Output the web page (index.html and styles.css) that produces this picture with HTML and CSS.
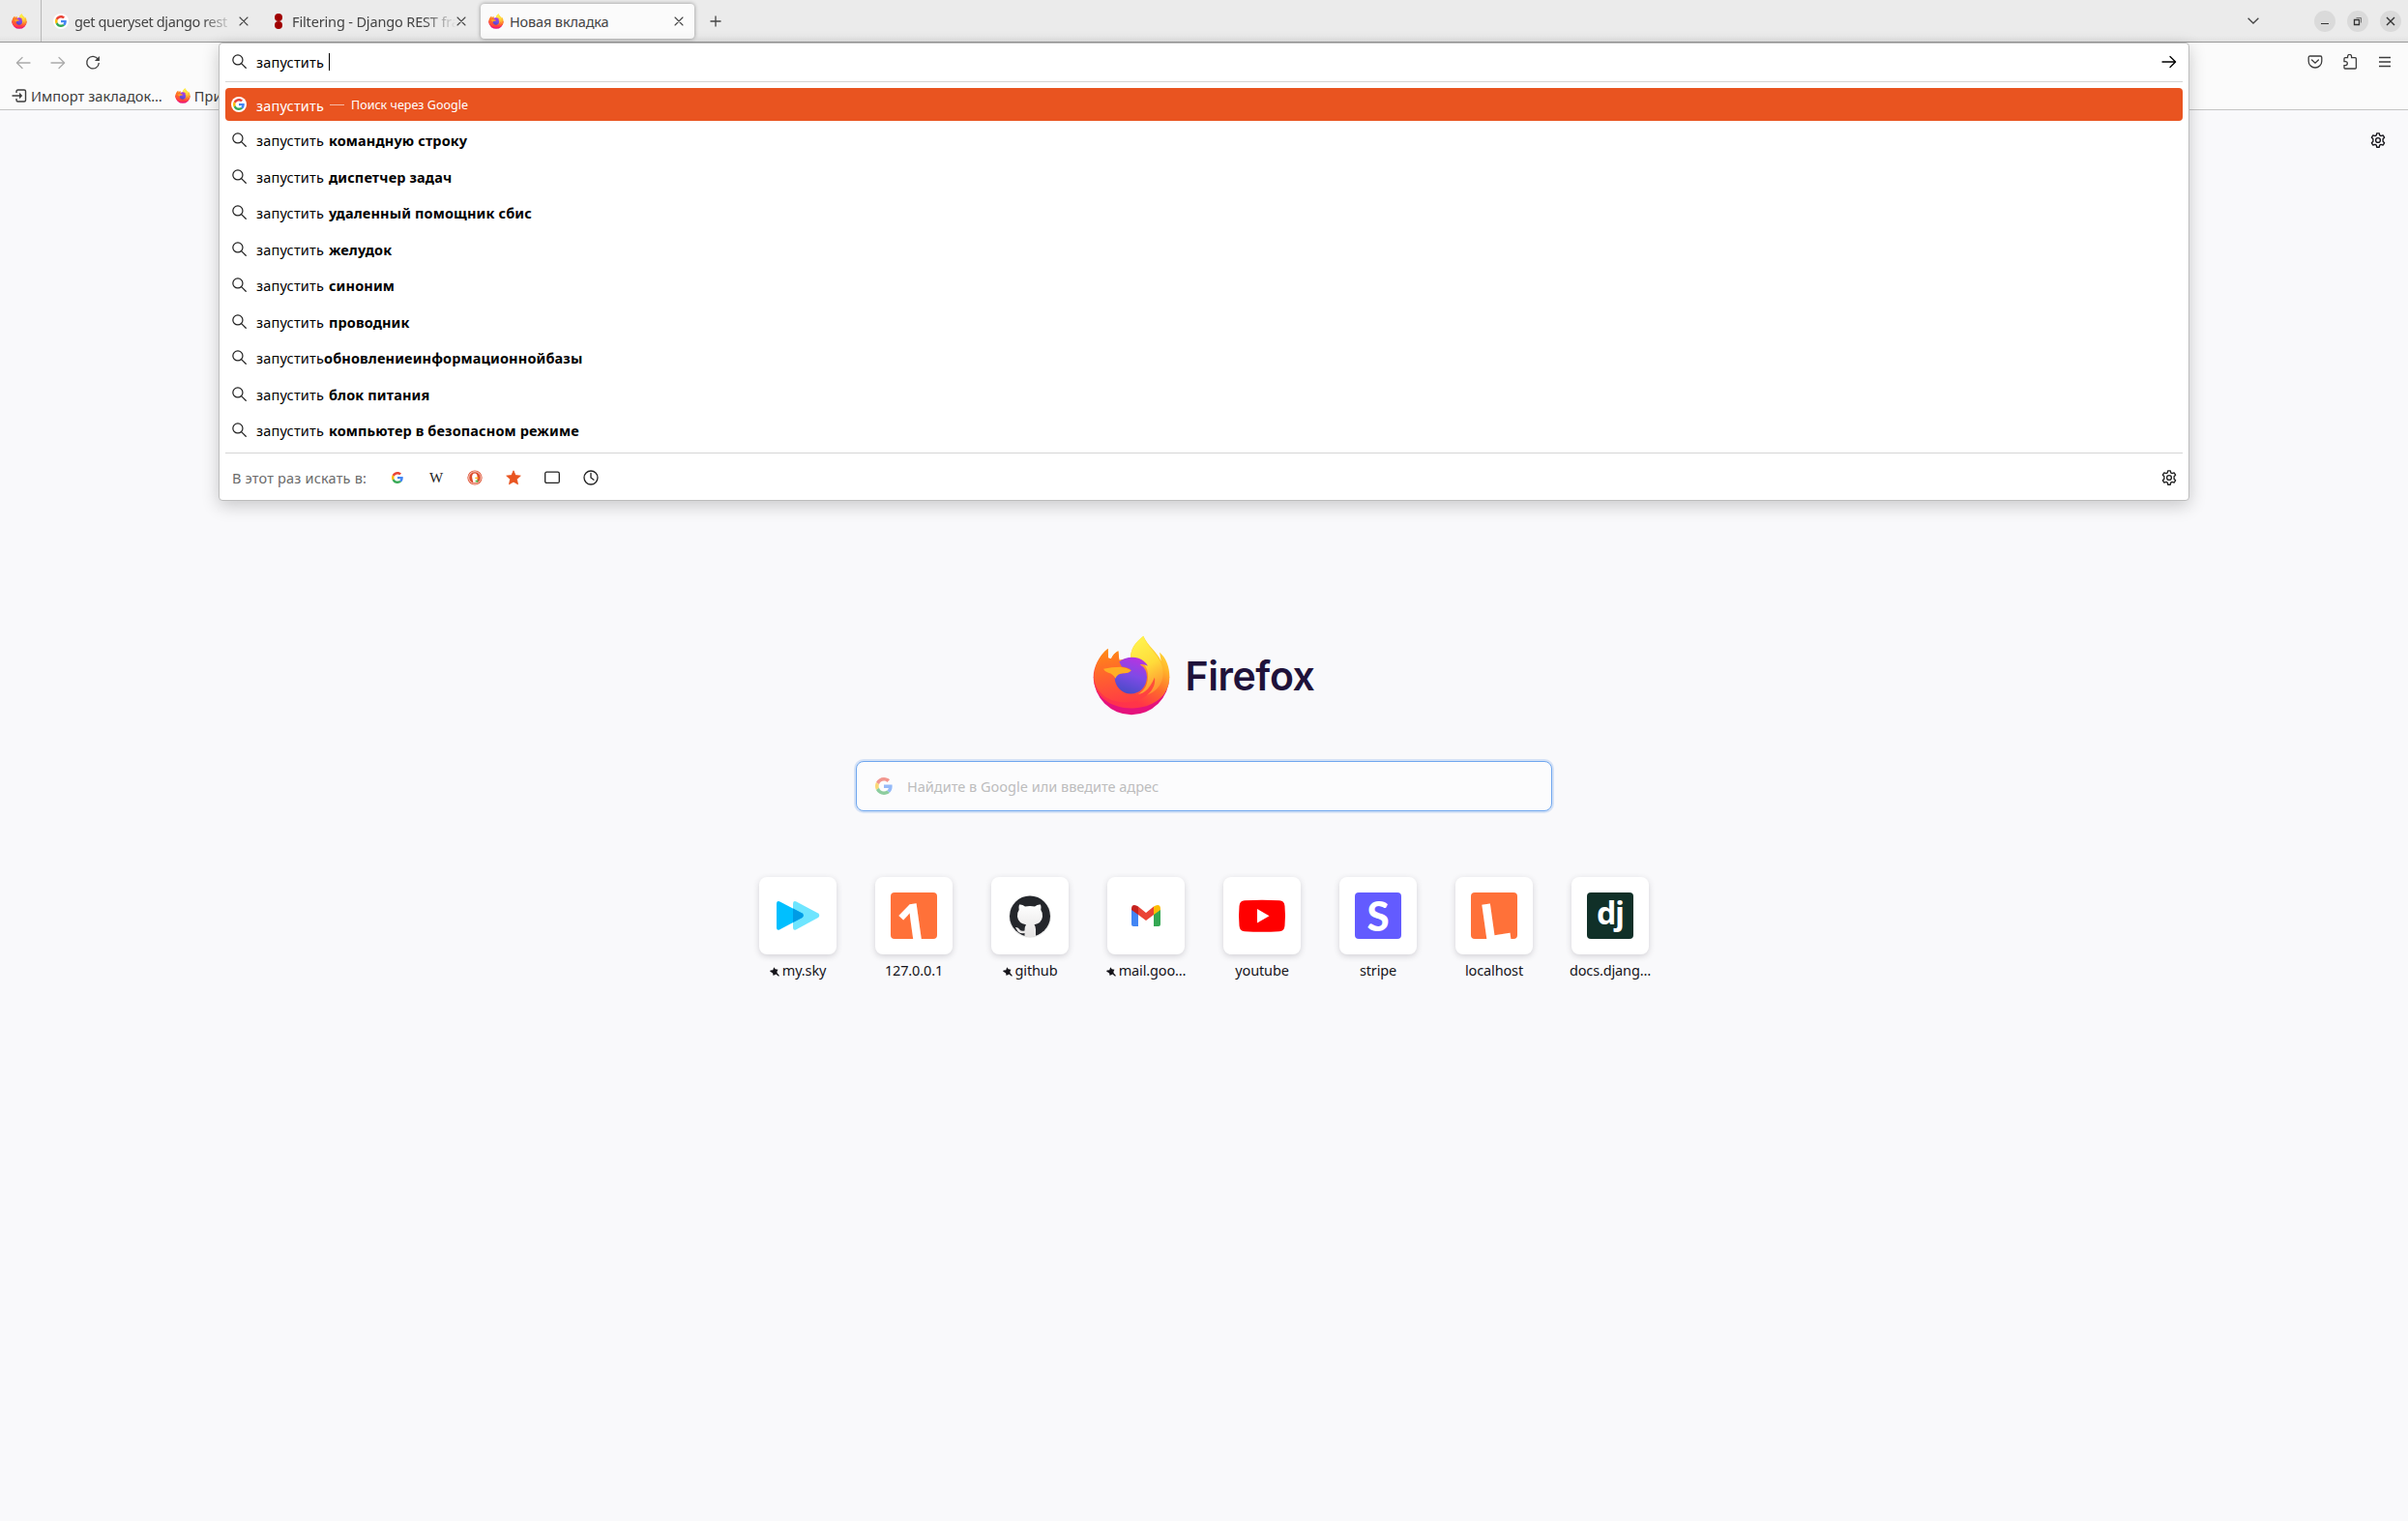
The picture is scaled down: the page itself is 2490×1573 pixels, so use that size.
FILE: index.html
```html
<!DOCTYPE html>
<html lang="ru">
<head>
<meta charset="utf-8">
<title>Новая вкладка</title>
<link rel="stylesheet" href="styles.css">
</head>
<body>
<svg class="defs" width="0" height="0" aria-hidden="true">
  <defs>
    <linearGradient id="body" x1=".8" y1="0" x2=".25" y2="1"><stop offset="0" stop-color="#ffe93f"/><stop offset=".3" stop-color="#ffb52a"/><stop offset=".55" stop-color="#ff6b2b"/><stop offset=".8" stop-color="#ff3647"/><stop offset="1" stop-color="#ff3050"/></linearGradient>
    <linearGradient id="flame" x1=".3" y1="0" x2=".6" y2="1"><stop offset="0" stop-color="#fff44f"/><stop offset=".5" stop-color="#ffdc3a"/><stop offset="1" stop-color="#ff8a30"/></linearGradient>
    <linearGradient id="orb" x1=".7" y1="0" x2=".4" y2="1"><stop offset="0" stop-color="#b833e1"/><stop offset=".5" stop-color="#7f4ae6"/><stop offset="1" stop-color="#4a4bc8"/></linearGradient>
    <linearGradient id="face" x1=".3" y1="0" x2=".5" y2="1"><stop offset="0" stop-color="#ff8a16"/><stop offset=".5" stop-color="#ff6030"/><stop offset="1" stop-color="#ff3c44"/></linearGradient>
    <linearGradient id="cat" x1="0" y1="0" x2="0" y2="1"><stop offset="0" stop-color="#fff"/><stop offset="1" stop-color="#e4e2e2"/></linearGradient>
    <symbol id="firefox" viewBox="60 50 240 248">
      <path fill="#e5127c" d="M63 180A117 116 0 0 0 297 180L280 160H80Z"/>
      <path fill="url(#body)" d="M107 91C80 112 62 148 62 180C63 240 118 276 180 276C248 276 298 238 298 178C298 148 288 120 267 102L272 130C260 102 230 82 217 52C192 72 178 90 177 120L142 126L139 98Q124 106 117 122L108 120Z"/>
      <path fill="url(#flame)" d="M217 52C192 72 177 92 177 122C215 122 238 150 230 190C226 216 208 232 188 238C235 244 276 215 278 170C280 118 233 96 217 52Z"/>
      <path fill="url(#face)" d="M107 91C76 118 64 150 64 184C70 224 100 256 160 258C225 256 258 215 252 180C230 232 205 236 176 232C148 230 128 206 128 182C130 172 138 166 150 164L178 158C174 150 160 148 150 144L142 126L139 98Q124 106 117 122L108 120Z"/>
      <path fill="url(#orb)" d="M142 132C160 114 200 112 218 130Q228 138 231 145Q218 138 206 140Q228 152 228 180C226 212 204 231 178 231C150 231 128 208 128 180Q134 168 154 167Q172 168 179 158Q170 149 150 147Z"/>
      <path fill="#ffae24" d="M93 154Q118 148 146 148Q166 150 179 158Q172 168 154 167Q136 168 130 184Q124 170 108 166Q96 162 93 154Z"/>
    </symbol>
    <symbol id="google" viewBox="0 0 48 48">
      <path fill="#EA4335" d="M24 9.5c3.54 0 6.71 1.22 9.21 3.6l6.85-6.85C35.9 2.38 30.47 0 24 0 14.62 0 6.51 5.38 2.56 13.22l7.98 6.19C12.43 13.72 17.74 9.5 24 9.5z"/>
      <path fill="#4285F4" d="M46.98 24.55c0-1.57-.15-3.09-.38-4.55H24v9.02h12.94c-.58 2.96-2.26 5.48-4.78 7.18l7.73 6c4.51-4.18 7.09-10.36 7.09-17.65z"/>
      <path fill="#FBBC05" d="M10.53 28.59c-.48-1.45-.76-2.99-.76-4.59s.27-3.14.76-4.59l-7.98-6.19C.92 16.46 0 20.12 0 24c0 3.88.92 7.54 2.56 10.78l7.97-6.19z"/>
      <path fill="#34A853" d="M24 48c6.48 0 11.93-2.13 15.89-5.81l-7.73-6c-2.15 1.45-4.92 2.3-8.16 2.3-6.26 0-11.57-4.22-13.47-9.91l-7.98 6.19C6.51 42.62 14.62 48 24 48z"/>
    </symbol>
    <symbol id="search" viewBox="0 0 16 16"><g fill="none" stroke="currentColor" stroke-width="1.3"><circle cx="6.3" cy="6.3" r="5.4"/><path d="M10.2 10.2l5 5" stroke-linecap="round"/></g></symbol>
    <symbol id="close" viewBox="0 0 10 10"><path d="M1 1l8 8M9 1L1 9" fill="none" stroke="currentColor" stroke-width="1.1" stroke-linecap="round"/></symbol>
    <symbol id="arrow" viewBox="0 0 16 14"><path d="M1 7h13.500M9 1.500L14.600 7L9 12.500" fill="none" stroke="currentColor" stroke-width="1.300" stroke-linecap="round" stroke-linejoin="round"/></symbol>
    <symbol id="gear" viewBox="0 0 16 16"><g fill="none" stroke="currentColor" stroke-width="1.35" stroke-linejoin="round"><path d="M6.700.8h2.600l.4 2 1.400.8 2-.7 1.500 2.300-1.500 1.600v2.400l1.500 1.600-1.500 2.300-2-.7-1.400.8-.4 2H6.700l-.4-2-1.400-.8-2 .7-1.500-2.300 1.500-1.600V6.800L1.400 5.200 2.900 2.900l2 .7 1.400-.8z"/><circle cx="8" cy="8" r="2.400"/></g></symbol>
    <symbol id="pin" viewBox="0 0 11 11"><path fill="currentColor" d="M4.600.2L6.300 2.400 9.300 3 8.200 5.200 8.300 7 10.900 9.900 10 10.800 7.100 8.200 5.300 9.200 4 10 3.400 7.200.1 5 .8 3.900 3.600 3.600z"/></symbol>
  </defs>
</svg>

<header class="tabbar">
  <div class="pinned"><svg class="i16"><use href="#firefox"/></svg></div>
  <div class="tab tab-a"><span class="gdisc"><svg><use href="#google"/></svg></span><span class="title fade">get queryset django rest</span><svg class="x"><use href="#close"/></svg></div>
  <div class="tab tab-b"><svg class="dots" viewBox="0 0 8 16"><g fill="#a00000"><circle cx="4" cy="4" r="4"/><circle cx="4" cy="12" r="4"/></g></svg><span class="title fade">Filtering - Django REST framework</span><svg class="x"><use href="#close"/></svg></div>
  <div class="tab active"><svg class="i16"><use href="#firefox"/></svg><span class="title">Новая вкладка</span><svg class="x"><use href="#close"/></svg></div>
  <svg class="plus" viewBox="0 0 12 12"><path d="M6 .5v11M.5 6h11" stroke="currentColor" stroke-width="1.300"/></svg>
  <div class="window">
    <svg class="chev" viewBox="0 0 12 7"><path d="M.6.8L6 6 11.400.8" fill="none" stroke="currentColor" stroke-width="1.300"/></svg>
    <span class="wbtn"><svg viewBox="0 0 22 22"><path d="M7 13.500h8" stroke="currentColor"/></svg></span>
    <span class="wbtn"><svg viewBox="0 0 22 22"><g fill="none" stroke="currentColor"><path d="M7.500 9.500h5v5h-5z" stroke-width="1.300"/><path d="M9.500 7.500h5v5" opacity=".6"/></g></svg></span>
    <span class="wbtn"><svg viewBox="0 0 22 22"><path d="M7 7l8 8M15 7l-8 8" stroke="currentColor" stroke-width="1.400"/></svg></span>
  </div>
</header>

<nav class="toolbar">
  <svg class="nav off back"><use href="#arrow"/></svg>
  <svg class="nav off"><use href="#arrow"/></svg>
  <svg class="reload" viewBox="0 0 16 16"><path d="M13.300 4.200A6.300 6.300 0 1 0 14.300 8" fill="none" stroke="currentColor" stroke-width="1.300"/><path d="M14.900 1v5H9.900z" fill="currentColor"/></svg>
  <div class="tools">
    <svg viewBox="0 0 16 16"><path d="M2.600 2h10.800a1.400 1.400 0 0 1 1.400 1.400v3.800a6.800 6.800 0 0 1-13.600 0V3.400A1.400 1.400 0 0 1 2.600 2zM4.600 6L8 9.200 11.400 6" fill="none" stroke="currentColor" stroke-width="1.300" stroke-linecap="round"/></svg>
    <svg viewBox="0 0 16 16"><path d="M2 6.300V4.700Q2 3.700 3 3.700H5.600V2.400a2 2 0 0 1 4 0V3.700h3.800q1 0 1 1V14q0 1-1 1H3q-1 0-1-1V11.600H3.300a2 2 0 0 0 0-4H2z" fill="none" stroke="currentColor" stroke-width="1.300"/></svg>
    <svg viewBox="0 0 16 16"><path d="M2 3.500h12M2 8h12M2 12.500h12" stroke="currentColor" stroke-width="1.300"/></svg>
  </div>
</nav>

<div class="bookmarks">
  <svg class="imp" viewBox="0 0 16 14"><path d="M5 4V2.500Q5 1 6.500 1H13q1.500 0 1.500 1.500v9Q14.500 13 13 13H6.500Q5 13 5 11.500V10M.5 7H9.500" fill="none" stroke="currentColor" stroke-width="1.400"/><path d="M8 3.800L11.200 7 8 10.200z" fill="currentColor"/></svg>
  <span class="bm">Импорт закладок…</span>
  <svg class="i16 bmf"><use href="#firefox"/></svg>
  <span class="bm">При</span>
</div>

<main class="page">
  <svg class="pagegear"><use href="#gear"/></svg>
  <div class="brand"><svg class="logo"><use href="#firefox"/></svg><span class="word">Firefox</span></div>
  <div class="search"><svg><use href="#google"/></svg><span>Найдите в Google или введите адрес</span></div>
  <div class="tiles">
    <div class="tile"><div class="card"><svg viewBox="0 0 80 80"><path fill="#6ee5ff" d="M35 27.500q0-3.500 3-2.200L61 37.500q2.500 2.200 0 4.600L38 54.500q-3 1-3-2z"/><path fill="#00bfff" d="M18 27.500q0-3.500 3-2.200L44.500 37.500q2.500 2.200 0 4.600L21 54.500q-3 1-3-2z"/><path fill="#009be5" d="M35 32.500L44.500 37.500q2.500 2.200 0 4.600L35 47z"/></svg></div><div class="label"><svg><use href="#pin"/></svg><span>my.sky</span></div></div>
    <div class="tile"><div class="card"><div class="fav orange"><span class="one">1</span></div></div><div class="label"><span>127.0.0.1</span></div></div>
    <div class="tile"><div class="card"><svg viewBox="0 0 80 80"><circle cx="40" cy="41" r="22" fill="#eee"/><circle cx="40" cy="40.500" r="21" fill="#24262b"/><path fill="url(#cat)" d="M29 28.500Q32 28 35 30.500Q40 29.300 45 30.500Q48 28 51 28.500Q52 31.500 51.300 34Q53.500 37 53 41Q52 48 44.500 49.200Q46 51 46 54V61.500Q40 63 34.500 61.500V58Q28 59 26.500 54.500Q25.500 53 25 52Q28 51.500 29.500 54.500Q31 56.500 34.500 55.500Q34.500 51 36 49.200Q28 48 27 41Q26.500 37 28.700 34Q28 31.500 29 28.500z"/></svg></div><div class="label"><svg><use href="#pin"/></svg><span>github</span></div></div>
    <div class="tile"><div class="card"><svg viewBox="0 0 80 80"><path fill="#4285f4" d="M25 33L32 38V51H27q-2 0-2-2z"/><path fill="#34a853" d="M55 33L48 38V51h5q2 0 2-2z"/><path fill="#ea4335" d="M32 30.500L40 37 48 30.500V39L40 45 32 39z"/><path fill="#c5221f" d="M25 33Q25 29 28 29Q30 29 32 30.500V39L25 34z"/><path fill="#fbbc04" d="M55 33Q55 29 52 29Q50 29 48 30.500V39L55 34z"/></svg></div><div class="label"><svg><use href="#pin"/></svg><span>mail.goo…</span></div></div>
    <div class="tile"><div class="card"><svg viewBox="0 0 80 80"><path fill="red" d="M22 24.300Q40 23.300 58 24.300Q63 24.500 63.500 30Q64.500 40 63.500 50.500Q63 56 58 56.300Q40 57.300 22 56.300Q17 56 16.500 50.500Q15.500 40 16.500 30Q17 24.500 22 24.300z"/><path fill="#fff" d="M35 33L47.500 40.300 35 47.500z"/></svg></div><div class="label"><span>youtube</span></div></div>
    <div class="tile"><div class="card"><div class="fav violet"><span class="ess">S</span></div></div><div class="label"><span>stripe</span></div></div>
    <div class="tile"><div class="card"><div class="fav orange"><span class="ell">L</span></div></div><div class="label"><span>localhost</span></div></div>
    <div class="tile"><div class="card"><div class="fav green"><span class="dj">dj</span></div></div><div class="label"><span>docs.djang…</span></div></div>
  </div>
</main>

<section class="popup">
  <div class="input"><svg class="mag"><use href="#search"/></svg><span class="typed">запустить</span><i class="caret"></i><svg class="nav go"><use href="#arrow"/></svg></div>
  <div class="results">
    <div class="row sel"><span class="gdisc"><svg><use href="#google"/></svg></span><span class="query">запустить</span><span class="dash"></span><span class="act">Поиск через Google</span></div>
    <div class="row"><svg class="mag"><use href="#search"/></svg><span>запустить <b>командную строку</b></span></div>
    <div class="row"><svg class="mag"><use href="#search"/></svg><span>запустить <b>диспетчер задач</b></span></div>
    <div class="row"><svg class="mag"><use href="#search"/></svg><span>запустить <b>удаленный помощник сбис</b></span></div>
    <div class="row"><svg class="mag"><use href="#search"/></svg><span>запустить <b>желудок</b></span></div>
    <div class="row"><svg class="mag"><use href="#search"/></svg><span>запустить <b>синоним</b></span></div>
    <div class="row"><svg class="mag"><use href="#search"/></svg><span>запустить <b>проводник</b></span></div>
    <div class="row"><svg class="mag"><use href="#search"/></svg><span>запустить<b>обновлениеинформационнойбазы</b></span></div>
    <div class="row"><svg class="mag"><use href="#search"/></svg><span>запустить <b>блок питания</b></span></div>
    <div class="row"><svg class="mag"><use href="#search"/></svg><span>запустить <b>компьютер в безопасном режиме</b></span></div>
  </div>
  <div class="engines">
    <span class="hint">В этот раз искать в:</span>
    <span class="eng"><svg class="g12"><use href="#google"/></svg></span>
    <span class="eng wiki">W</span>
    <span class="eng"><svg viewBox="0 0 16 16"><circle cx="8" cy="8" r="7.600" fill="#de4b2b"/><circle cx="8" cy="8" r="6.300" fill="none" stroke="#fff" stroke-width=".8"/><path fill="#fff" d="M6.500 13Q4.800 8 5.200 6Q5.600 3.600 8 3.600Q10.400 3.800 10.600 7L10.300 13z"/><path fill="#fdb924" d="M8.300 7.600h3.200v1.600H8.300z"/><path fill="#5fb54a" d="M8.500 11l2.800-.8v2.800l-2.800-.8z"/></svg></span>
    <span class="eng"><svg viewBox="0 0 16 16"><path fill="#e95420" stroke="#e95420" stroke-width=".8" stroke-linejoin="round" d="M8 .8l2.100 4.800 5.200.5-3.900 3.500 1.100 5.200L8 12.200l-4.500 2.600 1.100-5.200L.7 6.100l5.200-.5z"/></svg></span>
    <span class="eng"><svg viewBox="0 0 16 16"><rect x=".7" y="2.200" width="14.600" height="11.200" rx="1.500" fill="none" stroke="currentColor" stroke-width="1.300"/></svg></span>
    <span class="eng"><svg viewBox="0 0 16 16"><g fill="none" stroke="currentColor" stroke-width="1.300" stroke-linecap="round"><circle cx="8" cy="8" r="7"/><path d="M8 3.500V8l3 2.200"/></g></svg></span>
    <svg class="gear2"><use href="#gear"/></svg>
  </div>
</section>
</body>
</html>
```
FILE: styles.css
```css
* { box-sizing: border-box; }
body {
  margin: 0;
  width: 2490px;
  height: 1573px;
  overflow: hidden;
  position: relative;
  display: flex;
  flex-direction: column;
  background: #f9f9fb;
  color: #15141a;
  font: 14.5px/20px "Noto Sans", "Open Sans", sans-serif;
}
.defs { position: absolute; }
svg { display: block; flex: none; }
span { white-space: nowrap; }
.i16 { width: 16px; height: 16px; }

.tabbar {
  height: 44px;
  flex: none;
  display: flex;
  align-items: center;
  background: linear-gradient(#ebebeb 85%, #e2e2e2);
  border-bottom: 1px solid #989898;
  color: #444;
}
.pinned { width: 43px; height: 43px; padding: 14px 0 0 12px; border-right: 1px solid #b8b8b8; }
.tab { display: flex; align-items: center; height: 36px; }
.tab-a { width: 225px; padding-left: 12px; }
.tab-b { width: 229px; padding-left: 16px; }
.gdisc {
  width: 16px;
  height: 16px;
  flex: none;
  border-radius: 50%;
  background: #fff;
  display: grid;
  place-items: center;
}
.gdisc svg { width: 12px; height: 12px; }
.dots { width: 8px; height: 16px; }
.title { overflow: hidden; margin: 1px 0 0 6px; letter-spacing: -.15px; }
.tab-a .title { width: 165px; letter-spacing: -.38px; }
.tab-b .title { width: 170px; margin-left: 10px; }
.fade { mask-image: linear-gradient(90deg, #000 80%, transparent); }
.tab .x { width: 10px; height: 10px; margin-left: 5px; }
.tab-b .x { margin-left: 0; }
.active {
  width: 221px;
  padding-left: 8px;
  border-radius: 4px;
  background: #fbfbfb;
  box-shadow: 0 0 4px rgba(0, 0, 0, .4);
}
.active .title { flex: 1; }
.active .x { margin-right: 11px; }
.plus { width: 12px; height: 12px; margin-left: 15.5px; }
.window { margin-left: auto; padding-right: 7px; display: flex; align-items: center; gap: 12px; }
.chev { width: 12px; height: 7px; margin-right: 45px; }
.wbtn { width: 22px; height: 22px; border-radius: 50%; background: #dadada; color: #333; }

.toolbar {
  height: 42px;
  flex: none;
  display: flex;
  align-items: center;
  background: #fbfbfb;
  color: #3d3d3d;
  padding-left: 16px;
}
.nav { width: 16px; height: 14px; margin-right: 20px; }
.off { color: #ababab; }
.back { transform: scaleX(-1); }
.reload { width: 16px; height: 16px; }
.tools { margin-left: auto; padding: 0 16px 2px 0; display: flex; gap: 20px; }
.tools svg { width: 16px; height: 16px; }

.bookmarks {
  height: 28px;
  flex: none;
  display: flex;
  align-items: center;
  padding: 0 0 1px 12px;
  background: #fbfbfb;
  border-bottom: 1px solid #c4c4c4;
  color: #3d3d3d;
}
.imp { width: 16px; height: 14px; margin-right: 4px; }
.bm { letter-spacing: .07px; margin-top: -1px; }
.bmf { margin: 0 4px 0 13px; }

.page { flex: 1; display: flex; flex-direction: column; align-items: center; }
.pagegear { width: 16px; height: 16px; align-self: flex-end; margin: 23px 23px 0 0; }
.brand { display: flex; align-items: center; height: 84px; margin-top: 503px; gap: 15px; }
.logo { width: 80px; height: 83px; }
.word { font: 600 41px/50px Inter, sans-serif; letter-spacing: -.4px; color: #20123a; margin-top: 2px; }
.search {
  width: 720px;
  height: 52px;
  margin-top: 47px;
  padding-left: 19px;
  display: flex;
  align-items: center;
  gap: 15px;
  border: 1px solid #6fa6ee;
  border-radius: 8px;
  background: #fcfcfd;
  box-shadow: 0 0 0 2px #d5e2f6;
  color: #bdbdbd;
}
.search svg { width: 18px; height: 18px; opacity: .55; }
.tiles { display: flex; gap: 40px; margin-top: 68px; }
.tile { width: 80px; display: flex; flex-direction: column; align-items: center; }
.card {
  width: 80px;
  height: 80px;
  border-radius: 8px;
  background: #fff;
  box-shadow: 0 2px 6px rgba(58, 57, 68, .2);
  display: grid;
  place-items: center;
}
.card > svg { width: 80px; height: 80px; }
.fav { width: 48px; height: 48px; border-radius: 4px; overflow: hidden; display: flex; justify-content: center; color: #fff; }
.orange { background: #ff7139; }
.violet { background: #635bff; }
.green { background: #103028; }
.one, .ell { font: 700 56px/48px "Noto Sans", sans-serif; transform: translate(-2px, 6px) rotate(-8deg); }
.ell { transform: translate(1px, 5px) rotate(-8deg); }
.ess { font: 900 42px/48px Lato, sans-serif; }
.dj { font: 700 32px/42px "Noto Sans", sans-serif; letter-spacing: -1px; }
.label { display: flex; align-items: center; justify-content: center; gap: 3px; margin-top: 6px; letter-spacing: -.14px; }
.label svg { width: 10px; height: 10px; margin-top: 3px; }

.popup {
  position: absolute;
  left: 226px;
  top: 44px;
  width: 2038px;
  height: 474px;
  padding: 0 6px;
  border: 1px solid #bdbdbd;
  border-radius: 4px;
  background: #fff;
  box-shadow: 0 5px 18px rgba(0, 0, 0, .2);
  color: #000;
}
.input { height: 40px; display: flex; align-items: center; border-bottom: 1px solid #d5d5d5; padding: 0 0 1px 7px; }
.mag { width: 15px; height: 15px; margin: -1px 10px 0 0; color: #222; }
.typed, .query { letter-spacing: .18px; }
.caret { width: 1px; height: 18px; background: #000; margin-left: 5px; }
.go { margin: 0 6px 0 auto; }
.results { height: 384px; padding-top: 6px; display: flex; flex-direction: column; gap: 3.56px; border-bottom: 1px solid #d5d5d5; }
.row { height: 34px; flex: none; padding-left: 7px; display: flex; align-items: center; border-radius: 4px; letter-spacing: .18px; word-spacing: .9px; }
.row b { letter-spacing: .12px; word-spacing: 0; }
.sel { background: #e95420; color: #fff; padding-left: 6px; margin-bottom: -.5px; }
.sel .query, .sel .act { margin-top: 1px; }
.sel .gdisc { margin-right: 10px; }
.dash { width: 15px; height: 1px; margin: 1px 7px 0 6px; background: rgba(255, 255, 255, .6); }
.act { font-size: 12.5px; letter-spacing: .02px; word-spacing: 0; }
.engines { height: 48px; display: flex; align-items: center; padding: 2px 6px 0 7px; color: #222; }
.hint { color: #6b6b6b; margin-right: 12px; letter-spacing: .18px; }
.eng { width: 40px; display: grid; place-items: center; }
.eng svg { width: 16px; height: 16px; }
.eng .g12 { width: 12px; height: 12px; }
.wiki { font: 15px/18px "Liberation Serif", serif; }
.gear2 { width: 16px; height: 16px; margin-left: auto; }
```
